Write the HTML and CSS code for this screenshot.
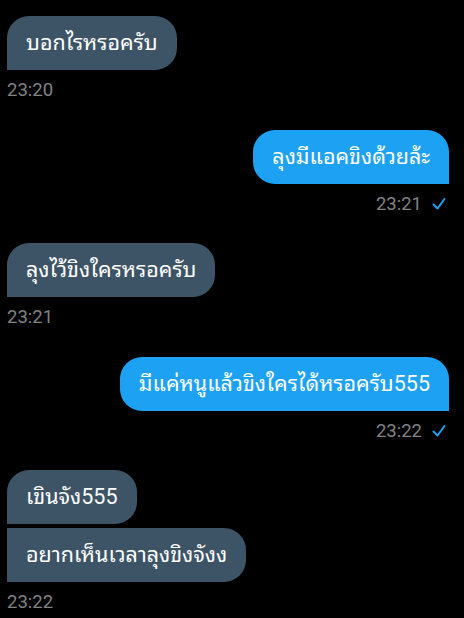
FILE: index.html
```html
<!DOCTYPE html>
<html lang="th">
<head>
    <meta charset="UTF-8">
    <meta name="viewport" content="width=device-width, initial-scale=1.0">
    <title>Messages</title>
    <link rel="stylesheet" href="styles.css">
</head>
<body>

<div class="chat">
    <div class="msg msg-in">
        <div class="bubble">บอกไรหรอครับ</div>
        <div class="meta">23:20</div>
    </div>

    <div class="msg msg-out">
        <div class="bubble">ลุงมีแอคขิงด้วยล้ะ</div>
        <div class="meta">23:21
            <svg class="check" viewBox="0 0 14 14" width="14" height="14"><path d="M1.5 7.5 L5.5 11.5 L12.5 2" /></svg>
        </div>
    </div>

    <div class="msg msg-in">
        <div class="bubble">ลุงไว้ขิงใครหรอครับ</div>
        <div class="meta">23:21</div>
    </div>

    <div class="msg msg-out">
        <div class="bubble">มีแค่หนูแล้วขิงใครได้หรอครับ555</div>
        <div class="meta">23:22
            <svg class="check" viewBox="0 0 14 14" width="14" height="14"><path d="M1.5 7.5 L5.5 11.5 L12.5 2" /></svg>
        </div>
    </div>

    <div class="msg msg-in">
        <div class="bubble first">เขินจัง555</div>
        <div class="bubble next">อยากเห็นเวลาลุงขิงจังง</div>
        <div class="meta">23:22</div>
    </div>
</div>

</body>
</html>
```

FILE: styles.css
```css
body {
    margin: 0;
    background-color: #000;
    font-family: Roboto, "Noto Sans Thai Looped", "Noto Sans Thai", "Noto Sans", sans-serif;
}
.chat {
    display: flex;
    flex-direction: column;
    padding: 16px 15px 0 7px;
}
.msg {
    display: flex;
    flex-direction: column;
    margin-bottom: 27.5px;
}
.msg-in {
    align-items: flex-start;
}
.msg-out {
    align-items: flex-end;
}
.bubble {
    font-size: 21.5px;
    line-height: 26px;
    color: #fff;
    padding: 14px 19px;
    border-radius: 22px;
    white-space: nowrap;
}
.msg-in .bubble {
    background-color: #3d5466;
    border-bottom-left-radius: 0;
}
.msg-out .bubble {
    background-color: #1da1f2;
    border-bottom-right-radius: 0;
}
.msg-in .bubble.next {
    margin-top: 4px;
    border-top-left-radius: 0;
}
.meta {
    display: flex;
    align-items: center;
    gap: 10px;
    margin-top: 8px;
    font-size: 18.5px;
    line-height: 24px;
    color: #818385;
}
.msg-out .meta {
    margin-right: 3px;
}
.check {
    fill: none;
    stroke: #1da1f2;
    stroke-width: 2;
    stroke-linecap: round;
    stroke-linejoin: round;
}
```
